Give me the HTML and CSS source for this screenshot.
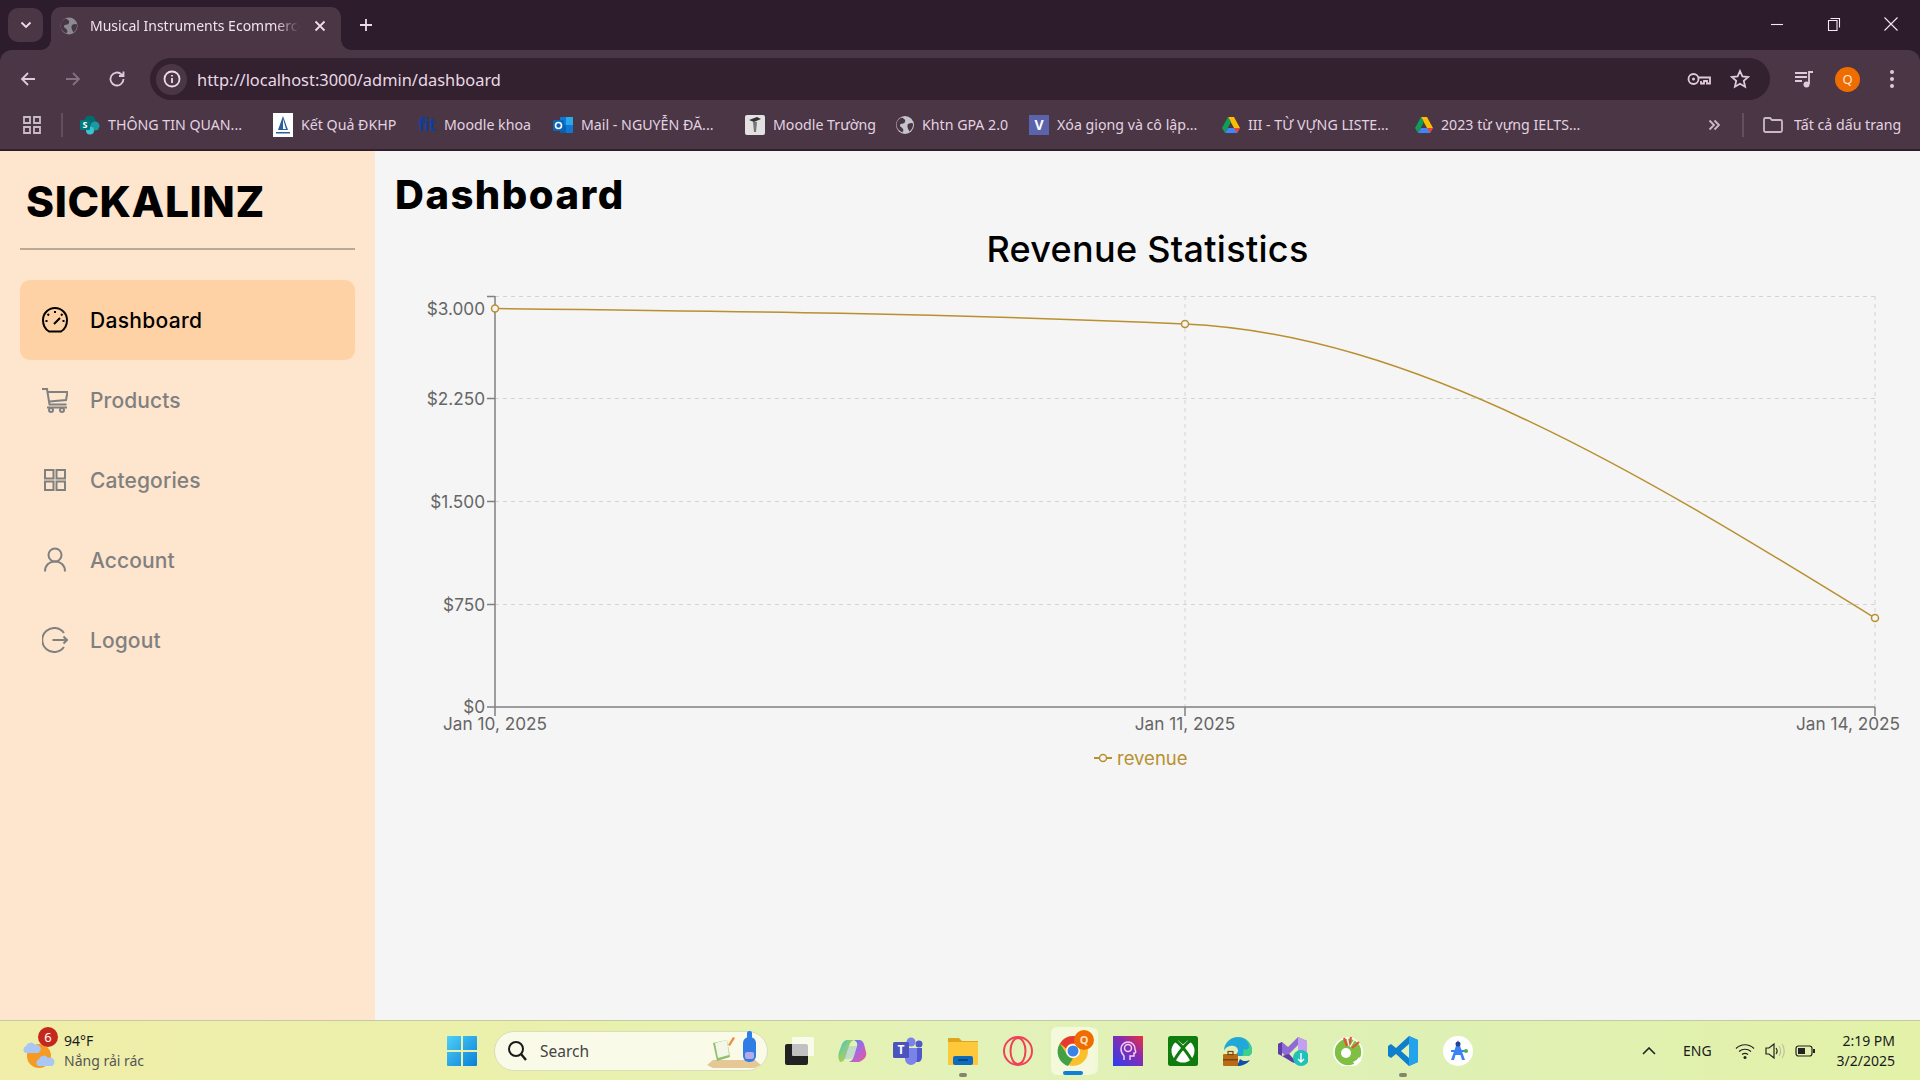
FILE: index.html
```html
<!DOCTYPE html>
<html lang="vi">
<head>
<meta charset="utf-8">
<title>Musical Instruments Ecommerce</title>
<link rel="stylesheet" href="styles.css">
</head>
<body>
<header class="chrome">
  <div class="tabstrip">
    <button class="tab-menu"><svg width="12" height="8" viewBox="0 0 12 8"><path d="M1.500 1.500 6 6l4.500-4.500" class="ic-w"/></svg></button>
    <div class="tab">
      <svg class="fav" width="18" height="18" viewBox="0 0 18 18"><circle cx="9" cy="9" r="8.500" fill="#8d8b92"/><path d="M6 1.500c2 1.500 4 2 3 4.500S4.500 7 4 9s3 2.500 3.500 5l-1 2.500C3 15 .5 12 .5 9 .5 5 3 2.500 6 1.500zM12 8c2-1 3.500-1.500 5-.5.300 3-1 6-3.500 8-1-2-3-5-1.500-7.500z" fill="#4a3546"/></svg>
      <span class="tab-title">Musical Instruments Ecommerce</span>
      <svg class="tab-x" width="12" height="12" viewBox="0 0 12 12"><path d="M1.500 1.500l9 9m0-9-9 9" class="ic-w"/></svg>
    </div>
    <svg class="tab-new" width="14" height="14" viewBox="0 0 14 14"><path d="M7 1v12M1 7h12" class="ic-w"/></svg>
    <div class="winctl">
      <svg width="14" height="14" viewBox="0 0 14 14"><path d="M1 7.500h12" class="ic-thin"/></svg>
      <svg width="14" height="14" viewBox="0 0 14 14"><path d="M3.500 1.500h9v9M1.500 3.500h8.500v10h-8.500z" class="ic-thin"/></svg>
      <svg width="14" height="14" viewBox="0 0 14 14"><path d="M.5.500l13 13m0-13-13 13" class="ic-thin"/></svg>
    </div>
  </div>
  <div class="toolbar">
    <div class="nav-btns">
      <svg width="18" height="18" viewBox="0 0 18 18"><path d="M16 9H3M9 3 3 9l6 6" class="ic"/></svg>
      <svg width="18" height="18" viewBox="0 0 18 18"><path d="M2 9h13M9 3l6 6-6 6" class="ic-dim"/></svg>
      <svg width="18" height="18" viewBox="0 0 18 18"><path d="M15.500 9a6.500 6.500 0 1 1-2-4.700L15.500 6M15.500 1.500V6H11" class="ic"/></svg>
    </div>
    <div class="omnibox">
      <span class="info"><svg width="18" height="18" viewBox="0 0 18 18"><circle cx="9" cy="9" r="7.500" class="ic-w"/><path d="M9 8v5M9 5v1.500" class="ic-w"/></svg></span>
      <span class="url">http://localhost:3000/admin/dashboard</span>
      <svg class="omni-key" width="24" height="16" viewBox="0 0 24 16"><circle cx="6.500" cy="8" r="5" class="ic"/><circle cx="6.500" cy="8" r="1.500" fill="#dfc9da"/><path d="M11.500 6.500H23v6h-3V10h-3v2.500h-3V10" class="ic"/></svg>
      <svg class="omni-star" width="20" height="20" viewBox="0 0 20 20"><path d="M10 2l2.400 5.400 5.800.600-4.400 3.900 1.300 5.800L10 14.700l-5.100 3 1.300-5.800L1.800 8l5.800-.600z" class="ic"/></svg>
    </div>
    <div class="tools">
      <svg width="20" height="20" viewBox="0 0 20 20"><path d="M1 4h12M1 8h12M1 12h7M15 15V3h4" class="ic"/><circle cx="12.500" cy="15.500" r="3" fill="#dfc9da"/></svg>
      <span class="avatar">Q</span>
      <svg width="6" height="20" viewBox="0 0 6 20"><circle cx="3" cy="3" r="2" fill="#dfc9da"/><circle cx="3" cy="10" r="2" fill="#dfc9da"/><circle cx="3" cy="17" r="2" fill="#dfc9da"/></svg>
    </div>
  </div>
  <nav class="bookmarks">
    <span class="bm-apps"><svg width="18" height="18" viewBox="0 0 18 18"><path d="M1 1h6v6H1zM11 1h6v6h-6zM1 11h6v6H1zM11 11h6v6h-6z" class="ic-grey"/></svg></span>
    <span class="bm-sep"></span>
    <a class="bm"><svg width="20" height="20" viewBox="0 0 20 20"><circle cx="10" cy="6" r="5.500" fill="#036c70"/><circle cx="15" cy="11" r="4.500" fill="#1a9ba1"/><circle cx="10" cy="15.500" r="4" fill="#37c6d0"/><rect x="0" y="5" width="10" height="10" rx="1" fill="#03787c"/><text x="5" y="13" class="bm-glyph">S</text></svg><span>THÔNG TIN QUAN...</span></a>
    <a class="bm"><svg width="20" height="24" viewBox="0 0 20 24"><rect width="20" height="24" fill="#fff"/><path d="M10 3 5 17h10z" fill="#2a5d9c"/><path d="M10 6v10h3z" fill="#fff"/><path d="M3 19h14v1.500H3z" fill="#2a5d9c"/></svg><span>Kết Quả ĐKHP</span></a>
    <a class="bm"><span class="fit">fit</span><span>Moodle khoa</span></a>
    <a class="bm"><svg width="20" height="20" viewBox="0 0 20 20"><rect x="7" y="2" width="13" height="16" rx="1" fill="#0f78d4"/><rect x="13" y="2" width="7" height="8" fill="#29a8ea"/><rect x="7" y="10" width="6" height="8" fill="#0a5eb0"/><rect y="5" width="11" height="11" rx="1" fill="#0a64b8"/><circle cx="5.500" cy="10.500" r="3" fill="none" stroke="#fff" stroke-width="1.600"/></svg><span>Mail - NGUYỄN ĐĂ...</span></a>
    <a class="bm"><svg width="20" height="20" viewBox="0 0 20 20"><rect width="20" height="20" rx="2" fill="#e2e2e2"/><path d="M4 5l8-3 4 2-7 3z" fill="#333"/><path d="M8 7h4l-1 10H9z" fill="#777"/></svg><span>Moodle Trường</span></a>
    <a class="bm"><svg width="18" height="18" viewBox="0 0 18 18"><circle cx="9" cy="9" r="9" fill="#c5c4c9"/><path d="M6 1.500c2 1.500 4 2 3 4.500S4.500 7 4 9s3 2.500 3.500 5l-1 2.500C3 15 .5 12 .5 9 .5 5 3 2.500 6 1.500zM12 8c2-1 3.500-1.500 5-.5.300 3-1 6-3.500 8-1-2-3-5-1.500-7.500z" fill="#4a3546"/></svg><span>Khtn GPA 2.0</span></a>
    <a class="bm"><span class="vbadge">V</span><span>Xóa giọng và cô lập...</span></a>
    <a class="bm"><svg width="18" height="18" viewBox="0 0 18 18"><path d="M6 1h6l6 11h-6z" fill="#fbbc04"/><path d="M6 1 0 12l3 5 6-11z" fill="#0f9d58"/><path d="M3 17h12l3-5H6z" fill="#4285f4"/><path d="M18 12h-6l3 5z" fill="#ea4335"/></svg><span>III - TỪ VỰNG LISTE...</span></a>
    <a class="bm"><svg width="18" height="18" viewBox="0 0 18 18"><path d="M6 1h6l6 11h-6z" fill="#fbbc04"/><path d="M6 1 0 12l3 5 6-11z" fill="#0f9d58"/><path d="M3 17h12l3-5H6z" fill="#4285f4"/><path d="M18 12h-6l3 5z" fill="#ea4335"/></svg><span>2023 từ vựng IELTS...</span></a>
    <span class="bm-more"><svg width="12" height="12" viewBox="0 0 12 12"><path d="M1.500 1.500 6 6l-4.500 4.500M6.500 1.500 11 6l-4.500 4.500" class="ic-grey"/></svg></span>
    <span class="bm-sep"></span>
    <a class="bm bm-all"><svg width="20" height="18" viewBox="0 0 20 18"><path d="M1 3.500a1.500 1.500 0 0 1 1.500-1.500H7l2 2h8.500A1.500 1.500 0 0 1 19 5.500v9a1.500 1.500 0 0 1-1.500 1.500h-15A1.500 1.500 0 0 1 1 14.500z" class="ic-grey"/></svg><span>Tất cả dấu trang</span></a>
  </nav>
</header>

<div class="page">
  <aside class="sidebar">
    <div class="brand">SICKALINZ</div>
    <ul class="menu">
      <li class="menu-item active">
        <svg width="26" height="26" viewBox="0 0 26 26"><path d="M7 24.500C3.500 22.500 1 18 1 13a12 12 0 0 1 24 0c0 5-2.500 9.500-6 11.500z" class="ni"/><path d="M13 4v2M5.500 7l1.500 1.500M20.500 7 19 8.500M3.500 14h2M20.500 14h2M12 17l6-6" class="ni"/></svg>
        <span>Dashboard</span>
      </li>
      <li class="menu-item">
        <svg width="26" height="26" viewBox="0 0 26 26"><path d="M0 2h5l2.500 15.500h17M5.500 5h20l-1.500 8-16.500 1.500" class="ni"/><path d="M5 20.500h20" class="ni"/><circle cx="9" cy="23" r="2" class="ni"/><circle cx="20" cy="23" r="2" class="ni"/></svg>
        <span>Products</span>
      </li>
      <li class="menu-item">
        <svg width="26" height="26" viewBox="0 0 26 26"><path d="M3 3h8.500v8.500H3zM14.500 3H23v8.500h-8.500zM3 14.500h8.500V23H3zM14.500 14.500H23V23h-8.500z" class="ni"/></svg>
        <span>Categories</span>
      </li>
      <li class="menu-item">
        <svg width="26" height="26" viewBox="0 0 26 26"><circle cx="13" cy="8" r="6.500" class="ni"/><path d="M3 24.500c0-6.500 4.500-10 10-10s10 3.500 10 10" class="ni"/></svg>
        <span>Account</span>
      </li>
      <li class="menu-item">
        <svg width="26" height="26" viewBox="0 0 26 26"><path d="M22 6A12 12 0 1 0 22 20" class="ni"/><path d="M10.500 13H25M21.500 9.500 25 13l-3.500 3.500" class="ni"/></svg>
        <span>Logout</span>
      </li>
    </ul>
  </aside>
  <main class="main">
    <h1 class="page-title">Dashboard</h1>
    <h2 class="chart-title">Revenue Statistics</h2>
    <svg class="chart" width="1545" height="520" viewBox="375 273 1545 520">
      <g class="grid">
        <path d="M495 296.500H1875M495 398.500H1875M495 501.500H1875M495 604.500H1875M1185 296V707M1875 296V707"/>
      </g>
      <g class="axis">
        <path d="M495 296V707H1875M487 296.500h8M487 398.500h8M487 501.500h8M487 604.500h8M487 707h8M495 707v9M1185 707v9M1875 707v9"/>
      </g>
      <g class="ylab">
        <text x="485" y="315">$3.000</text>
        <text x="485" y="405">$2.250</text>
        <text x="485" y="508">$1.500</text>
        <text x="485" y="611">$750</text>
        <text x="485" y="713">$0</text>
      </g>
      <g class="xlab">
        <text x="495" y="730">Jan 10, 2025</text>
        <text x="1185" y="730">Jan 11, 2025</text>
        <text x="1900" y="730" class="xlab-end">Jan 14, 2025</text>
      </g>
      <path class="line" d="M495 308.500C725 311.080 955 313.670 1185 324C1415 334.330 1645 476.200 1875 618"/>
      <circle class="dot" cx="495" cy="308.500" r="3.500"/>
      <circle class="dot" cx="1185" cy="324" r="3.500"/>
      <circle class="dot" cx="1875" cy="618" r="3.500"/>
      <path class="line legend-line" d="M1094 758h18"/>
      <circle class="dot" cx="1103" cy="758" r="3.500"/>
      <text class="legend" x="1117" y="765">revenue</text>
    </svg>
  </main>
</div>

<footer class="taskbar">
  <div class="weather">
    <svg class="w-icon" width="36" height="40" viewBox="0 0 36 40"><circle cx="17" cy="23" r="12" fill="#f59a23"/><path d="M3 20a4 4 0 0 1 1-7 5 5 0 0 1 9-1 4 4 0 0 1 3 8z" fill="#a9c6f5"/><path d="M16 33a4 4 0 0 1 1-7 5 5 0 0 1 9-1 4 4 0 0 1 4 8z" fill="#a9c6f5"/></svg>
    <span class="w-badge">6</span>
    <div class="w-text"><span class="w-temp">94°F</span><span class="w-desc">Nắng rải rác</span></div>
  </div>
  <div class="center">
    <svg class="winlogo" width="30" height="30" viewBox="0 0 30 30"><defs><linearGradient id="wl" x1="0" y1="0" x2="1" y2="1"><stop offset="0" stop-color="#4dd0f7"/><stop offset="1" stop-color="#0a7fd8"/></linearGradient></defs><path d="M0 1a1 1 0 0 1 1-1h13v14H0zM16 0h13a1 1 0 0 1 1 1v13H16zM0 16h14v14H1a1 1 0 0 1-1-1zM16 16h14v13a1 1 0 0 1-1 1H16z" fill="url(#wl)"/></svg>
    <div class="search">
      <svg width="20" height="22" viewBox="0 0 20 22"><circle cx="9" cy="9" r="7" fill="none" stroke="#1a1a1a" stroke-width="2"/><path d="M14 14l5 6" stroke="#1a1a1a" stroke-width="2.400"/></svg>
      <span class="search-text">Search</span>
      <svg class="search-art" width="54" height="38" viewBox="0 0 54 38"><path d="M0 34l6-5h42l6 5-6 3H6z" fill="#e6c796"/><path d="M6 12l14-3 3 17-13 4z" fill="#8fbf6a"/><path d="M8 12l12-3 2 15-11 3z" fill="#f4f6e8"/><path d="M21 14l5-8 2 1-5 8z" fill="#f08a3a"/><rect x="36" y="6" width="13" height="25" rx="6" fill="#2f7ee6"/><rect x="40" y="0" width="5" height="8" rx="2" fill="#2f7ee6"/><rect x="38" y="21" width="9" height="7" rx="2" fill="#b8a8e8"/></svg>
    </div>
    <div class="apps">
      <span class="app"><svg width="30" height="28" viewBox="0 0 30 28"><rect y="7" width="23" height="21" rx="2" fill="#222"/><rect x="7" width="22" height="19" rx="1" fill="#fff" fill-opacity=".72"/></svg></span>
      <span class="app"><svg width="29" height="24" viewBox="0 0 29 24"><defs><linearGradient id="cp1" x1="0" y1="0" x2="1" y2="1"><stop offset="0" stop-color="#35c1e8"/><stop offset=".5" stop-color="#9ad060"/><stop offset="1" stop-color="#f3b52f"/></linearGradient><linearGradient id="cp2" x1="0" y1="0" x2="1" y2="1"><stop offset="0" stop-color="#2f8fe8"/><stop offset=".5" stop-color="#a868e0"/><stop offset="1" stop-color="#ee5a8a"/></linearGradient></defs><path d="M9 1h7c-3 1-4 3-5 6L7 19c-1 3-3 4-5 4-2-3-2-7-1-10L4 5c1-2 3-4 5-4z" fill="url(#cp1)"/><path d="M16 1h5c3 0 4 2 5 4l2 8c1 4-1 7-5 9-1 1-3 1-4 1h-8c3-1 4-3 5-6l3-10c1-3-1-5-3-6z" fill="url(#cp2)"/><path d="M6 10c2-2 4-3 6-3h7l-3 10c-1 2-3 3-5 3H5z" fill="#7fb7ef" fill-opacity=".35"/></svg></span>
      <span class="app"><svg width="30" height="30" viewBox="0 0 30 30"><circle cx="18" cy="6" r="4.500" fill="#7b83eb"/><circle cx="26" cy="8" r="3.500" fill="#5059c9"/><path d="M21 12h8v9c0 3-2 5-4 5h-4z" fill="#5059c9"/><path d="M10 12h14v11a6 6 0 0 1-12 0z" fill="#7b83eb"/><rect y="6" width="16" height="16" rx="1.500" fill="#4b53bc"/><text x="8" y="18" class="app-glyph">T</text></svg></span>
      <span class="app"><svg width="30" height="28" viewBox="0 0 30 28"><path d="M0 1h11l3 3h16v6H0z" fill="#e0a41f"/><path d="M0 5h30v23H0z" fill="#fdc93a"/><rect x="5" y="19" width="20" height="9" rx="2" fill="#0f6cbd"/><path d="M10 23h10" stroke="#083f70" stroke-width="1.500"/></svg></span>
      <span class="app"><svg width="30" height="30" viewBox="0 0 30 30"><ellipse cx="15" cy="15" rx="14" ry="14" fill="none" stroke="#f0405a" stroke-width="2"/><ellipse cx="15" cy="15" rx="7.500" ry="13" fill="none" stroke="#f0405a" stroke-width="2"/></svg></span>
      <span class="app app-active"><svg width="30" height="34" viewBox="0 0 30 34"><g transform="translate(0,-2)"><circle cx="15" cy="19" r="15" fill="#fbc02d"/><path d="M15 4a15 15 0 0 1 13 7.500H15a7.500 7.500 0 0 0-7 5L2 11.500A15 15 0 0 1 15 4z" fill="#e53935"/><path d="M2 11.500l7 11a7.500 7.500 0 0 0 6 4L10 34A15 15 0 0 1 2 11.500z" fill="#43a047"/><circle cx="15" cy="19" r="7" fill="#fff"/><circle cx="15" cy="19" r="5.500" fill="#3b82e6"/></g><circle cx="26" cy="6" r="10" fill="#ef6c00"/><text x="26" y="10" class="app-q">Q</text></svg></span>
      <span class="app"><svg width="30" height="30" viewBox="0 0 30 30"><defs><linearGradient id="pp" x1="0" y1="1" x2="1" y2="0"><stop offset="0" stop-color="#2b3ff0"/><stop offset=".6" stop-color="#8a2bb0"/><stop offset="1" stop-color="#f0303a"/></linearGradient></defs><rect width="30" height="30" fill="url(#pp)"/><path d="M11 24v-4c-2-2-3-4-3-7a7 7 0 0 1 14 0c0 2 2 3 0 4h-1v3h-4v4" fill="none" stroke="#f2d0f0" stroke-width="1.500"/><circle cx="15" cy="12" r="3.500" fill="none" stroke="#f2d0f0" stroke-width="1.500"/></svg></span>
      <span class="app"><svg width="30" height="30" viewBox="0 0 30 30"><rect width="30" height="30" rx="2.500" fill="#107c10"/><circle cx="15" cy="15" r="11.500" fill="#fff"/><path d="M6 4c4 1 15 14 19 23M24 4C20 5 9 18 5 27" fill="none" stroke="#107c10" stroke-width="3"/><path d="M8 2.500c4-2 10-2 14 0l-7 6z" fill="#107c10"/></svg></span>
      <span class="app"><svg width="30" height="30" viewBox="0 0 30 30"><path d="M1 15a14 14 0 0 1 28 0c0 3-2 5-5 5h-9c-2 0-2-2-1-3 2-2 1-6-3-7-5-1-9 2-10 5z" fill="#1fa8d8"/><path d="M29 15c0-7-6-14-14-14 5 0 11 4 11 10-1 3-4 3-6 2 1 3 0 6-1 7h5c3 0 5-2 5-5z" fill="#3fd08a"/><path d="M14 30c5 0 10-2 13-6-4 2-8 1-10-1z" fill="#0f4fa8"/><rect y="18" width="15" height="12" rx="1" fill="#b86a14"/><rect x="5" y="15.500" width="5" height="3" fill="none" stroke="#7a4410" stroke-width="1.200"/><rect y="23" width="15" height="1.500" fill="#7a4410"/></svg></span>
      <span class="app"><svg width="30" height="30" viewBox="0 0 30 30"><path d="M20 1l9 4v18l-9 5V9l-9 9 9 10-6-2L0 13V8l4-2 6 5z" fill="#8f6bd8"/><path d="M20 1l9 4v18l-9 5z" fill="#c49ff0"/><path d="M0 8l4-2v14l-4-2z" fill="#5e3ea6"/><path d="M4 20l10 6 6 2-9-10z" fill="#5e3ea6"/><circle cx="23" cy="22" r="8" fill="#20c2b8"/><path d="M23 17v9M20 23l3 3 3-3" fill="none" stroke="#fff" stroke-width="1.400"/></svg></span>
      <span class="app"><svg width="30" height="30" viewBox="0 0 30 30"><circle cx="15" cy="16" r="14" fill="#7fbf44" stroke="#fff" stroke-width="1.500"/><circle cx="13" cy="17" r="5" fill="#fff"/><path d="M20 26a10 10 0 0 0 6-5l3 3-6 6z" fill="#fff"/><path d="M11 2l3 8M18 1l-2 9M26 6l-7 6" stroke="#e8503a" stroke-width="2.200"/><path d="M14 1l2 9M22 3l-5 8" stroke="#fff" stroke-width="1.200"/></svg></span>
      <span class="app"><svg width="30" height="30" viewBox="0 0 30 30"><path d="M21 0l9 4v22l-9 4L8 18l-5 4-3-2v-10l3-2 5 4z" fill="#0f7fcb"/><path d="M21 0l9 4v22l-9 4z" fill="#23a3ec"/><path d="M21 8v14l-8-7z" fill="#e3f2b8"/></svg></span>
      <span class="app"><svg width="30" height="30" viewBox="0 0 30 30"><circle cx="15" cy="15" r="15" fill="#fff"/><path d="M15 4l-7 20h3l1.500-5h5l1.500 5h3z" fill="#3b82f6"/><circle cx="15" cy="8" r="2.500" fill="#24408e"/><path d="M8 15h14" stroke="#3b82f6" stroke-width="2"/><circle cx="23" cy="15" r="2" fill="#4caf50"/></svg></span>
    </div>
  </div>
  <div class="tray">
    <svg class="tray-chev" width="14" height="8" viewBox="0 0 14 8"><path d="M1 7l6-6 6 6" class="tr"/></svg>
    <span class="tray-lang">ENG</span>
    <svg class="tray-wifi" width="20" height="16" viewBox="0 0 20 16"><path d="M1 5.500c5-5 13-5 18 0M4 8.500c3.500-3 8.500-3 12 0M7 11.500c2-1.500 4-1.500 6 0" class="tr-t"/><circle cx="10" cy="14.500" r="1.500" fill="#222"/></svg>
    <svg class="tray-vol" width="20" height="16" viewBox="0 0 20 16"><path d="M1 5h3l5-4v14l-5-4H1z" class="tr-t"/><path d="M11 5c1.500 2 1.500 4 0 6" class="tr-t"/><path d="M14 3c2 3 2 7 0 10M17 1c3 4 3 10 0 14" class="tr-faint"/></svg>
    <svg class="tray-bat" width="20" height="12" viewBox="0 0 20 12"><rect x="1" y="1" width="16" height="10" rx="2.500" class="tr-t"/><rect x="3" y="3" width="7" height="6" fill="#222"/><rect x="18" y="4" width="2" height="4" fill="#222"/></svg>
    <div class="clock"><span>2:19 PM</span><span>3/2/2025</span></div>
  </div>
</footer>
</body>
</html>
```
FILE: styles.css
```css
* { box-sizing: border-box; }
html, body { margin: 0; height: 100%; }
body {
  width: 1920px;
  height: 1080px;
  overflow: hidden;
  display: flex;
  flex-direction: column;
  font-family: "Noto Sans", "Open Sans", sans-serif;
  background: #f5f5f5;
}

/* stroke helpers */
.ic-w { fill: none; stroke: #ecdcea; stroke-width: 1.800; }
.ic { fill: none; stroke: #dfc9da; stroke-width: 1.800; }
.ic-dim { fill: none; stroke: #857081; stroke-width: 1.800; }
.ic-thin { fill: none; stroke: #f3e9f1; stroke-width: 1.100; }
.ic-grey { fill: none; stroke: #c9bbc6; stroke-width: 1.800; }

/* browser chrome */
.chrome { height: 151px; flex: none; background: #2d1c2c; display: flex; flex-direction: column; }
.tabstrip { height: 50px; display: flex; align-items: flex-end; position: relative; }
.tab-menu {
  width: 35px; height: 34px; margin: 0 8px 8px; padding: 0; border: 0; border-radius: 10px;
  background: #4b3646; display: flex; align-items: center; justify-content: center;
}
.tab {
  width: 290px; height: 43px; background: #4b3646; border-radius: 10px 10px 0 0;
  display: flex; align-items: center; padding: 0 15px 6px 9px; position: relative;
}
.tab::before, .tab::after {
  content: ""; position: absolute; bottom: 0; width: 10px; height: 10px;
}
.tab::before { left: -10px; background: radial-gradient(circle at 0 0, #2d1c2c 9.500px, #4b3646 10px); }
.tab::after { right: -10px; background: radial-gradient(circle at 100% 0, #2d1c2c 9.500px, #4b3646 10px); }
.fav { flex: none; margin-right: 12px; }
.tab-title {
  width: 210px; flex: none; overflow: hidden; white-space: nowrap; font-size: 14px; color: #f0e2ee;
  -webkit-mask-image: linear-gradient(90deg, #000 88%, transparent 100%);
  mask-image: linear-gradient(90deg, #000 88%, transparent 100%);
}
.tab-x { margin-left: 14px; flex: none; }
.tab-new { margin: 0 0 18px 18px; }
.winctl { margin-left: auto; width: 150px; padding-right: 22px; height: 50px; display: flex; align-items: flex-start; justify-content: space-between; padding-top: 17px; }

.toolbar {
  height: 50px; background: #4b3646; border-radius: 12px 12px 0 0; padding-top: 8px;
  display: flex; align-items: center;
}
.nav-btns { width: 150px; padding: 0 24px 0 19px; display: flex; justify-content: space-between; flex: none; }
.omnibox {
  width: 1620px; height: 42px; border-radius: 21px; background: #33212f;
  display: flex; align-items: center; padding: 0 20px 0 6px; flex: none;
}
.info { width: 31px; height: 31px; border-radius: 50%; background: #4b3646; display: flex; align-items: center; justify-content: center; flex: none; }
.url { margin-left: 10px; font-size: 16.400px; color: #e9d9e6; white-space: nowrap; flex: 1; }
.omni-star { margin-left: 19px; }
.tools { flex: 1; display: flex; align-items: center; padding-left: 24px; }
.avatar {
  width: 25px; height: 25px; border-radius: 50%; background: #ef6c00; color: #ffe9d6; font-size: 13px;
  display: flex; align-items: center; justify-content: center; margin: 0 29px 0 21px;
}

.bookmarks {
  height: 50px; background: #4b3646; border-bottom: 1px solid #33212f;
  display: grid; align-items: center; padding-left: 23px;
  grid-template-columns: 38px 19px 193px 145px 135px 192px 151px 133px 193px 193px 293px 34px 21px 1fr;
}
.bm-apps, .bm-more { display: flex; align-items: center; }
.bm-sep { width: 2px; height: 24px; background: #62505f; }
.bm { display: flex; align-items: center; gap: 8px; color: #e3d3e0; font-size: 14.200px; white-space: nowrap; }
.bm svg { flex: none; }
.bm-glyph { font: 700 9px "Noto Sans", sans-serif; fill: #fff; text-anchor: middle; }
.fit { width: 18px; color: #0e3f9e; font: 700 17px "Open Sans", sans-serif; letter-spacing: -.5px; }
.vbadge { width: 20px; height: 20px; background: #5a63ab; color: #fff; font-size: 14px; font-weight: 700; display: flex; align-items: center; justify-content: center; flex: none; }
.bm-all { gap: 11px; }

/* page */
.page { flex: 1; display: flex; min-height: 0; }
.sidebar { width: 375px; flex: none; background: #fee5cd; padding: 0 20px; }
.brand {
  height: 99px; padding: 21px 0 0 6px; border-bottom: 2px solid #baa896;
  font: 800 42.500px/60px Inter, sans-serif; color: #000; letter-spacing: .6px;
}
.menu { list-style: none; margin: 30px 0 0; padding: 0; }
.menu-item {
  height: 80px; display: flex; align-items: center; gap: 22px; padding-left: 22px; border-radius: 10px;
  font: 500 21px Inter, sans-serif; letter-spacing: .1px; color: #808080;
}
.menu-item svg { flex: none; }
.ni { fill: none; stroke: currentColor; stroke-width: 2; }
.menu-item.active { background: #fed2a4; color: #000; letter-spacing: .3px; }

.main { flex: 1; min-width: 0; padding-top: 14px; }
.page-title { margin: 0; padding-left: 20px; font: 800 40px/60px Inter, sans-serif; letter-spacing: 1.500px; color: #000; height: 60px; }
.chart-title { margin: 0; height: 48px; text-align: center; font: 500 36px/48px Inter, sans-serif; letter-spacing: .3px; color: #000; }
.chart { display: block; }
.grid path { fill: none; stroke: #d4d4d4; stroke-width: 1; stroke-dasharray: 4 4; }
.axis path { fill: none; stroke: #808080; stroke-width: 1.500; }
.ylab text, .xlab text { font: 400 17.200px Inter, sans-serif; fill: #666; }
.ylab text { text-anchor: end; }
.xlab text { text-anchor: middle; }
.xlab .xlab-end { text-anchor: end; }
.line { fill: none; stroke: #b8902f; stroke-width: 1.500; }
.legend-line { stroke-width: 2; }
.dot { fill: #f5f5f5; stroke: #b8902f; stroke-width: 1.500; }
.legend { font: 400 18.500px Inter, sans-serif; fill: #b8902f; }

/* taskbar */
.taskbar {
  height: 60px; flex: none; border-top: 1px solid #c6caa2; display: flex; align-items: center; position: relative;
  background: linear-gradient(90deg, #f0eea9 0%, #ebf0ab 25%, #e3f2b8 50%, #dff0b4 75%, #e3f2a8 100%);
}
.weather { width: 447px; flex: none; display: flex; align-items: center; padding-left: 22px; position: relative; height: 100%; }
.w-icon { flex: none; margin-top: 4px; }
.w-badge {
  position: absolute; left: 38px; top: 6px; width: 20px; height: 20px; border-radius: 50%; background: #c4281c; color: #fff;
  font-size: 13px; display: flex; align-items: center; justify-content: center;
}
.w-text { display: flex; flex-direction: column; margin-left: 6px; font-size: 14px; line-height: 20px; color: #1a1a1a; }
.w-desc { color: #555; }
.center { display: flex; align-items: center; flex: none; }
.search {
  width: 274px; height: 40px; margin-left: 17px; border-radius: 20px; background: #f9fbe8; border: 1px solid #d9dfb8;
  display: flex; align-items: center; padding: 0 6px 0 12px; position: relative;
}
.search-text { margin-left: 13px; font-size: 15.500px; color: #444; flex: 1; }
.search-art { flex: none; margin-top: -2px; }
.apps { display: flex; align-items: center; margin-left: 17px; }
.app { width: 55px; height: 48px; display: flex; align-items: center; justify-content: center; position: relative; }
.app:nth-child(1) { width: 34px; justify-content: flex-start; }
.app:nth-child(2) { margin-left: 6px; }
.app:nth-child(4)::after, .app:nth-child(12)::after {
  content: ""; position: absolute; bottom: -2px; left: 50%; width: 8px; height: 4px; margin-left: -4px; border-radius: 2px; background: #84866a;
}
.app-active { background: #f4f9dc; border-radius: 6px; width: 44px; margin: 0 5px 0 6px; box-shadow: 4px 0 0 -1px #f2f7d6; }
.app-active svg { overflow: visible; }
.app-active::after {
  content: ""; position: absolute; bottom: 0; left: 50%; width: 20px; height: 4px; margin-left: -10px; border-radius: 2px; background: #0f7fd8;
}
.app-glyph { font: 700 12px "Noto Sans", sans-serif; fill: #fff; text-anchor: middle; }
.app-q { font: 700 11px "Noto Sans", sans-serif; fill: #ffe0c0; text-anchor: middle; }
.tray { margin-left: auto; width: 278px; display: flex; align-items: center; color: #1a1a1a; padding-right: 25px; flex: none; }
.tr { fill: none; stroke: #222; stroke-width: 1.600; }
.tr-t { fill: none; stroke: #222; stroke-width: 1.200; }
.tr-faint { fill: none; stroke: #bdbf9c; stroke-width: 1.200; }
.tray-chev { flex: none; }
.tray-lang { margin-left: 27px; font-size: 14px; width: 30px; }
.tray-wifi { margin-left: 22px; flex: none; }
.tray-vol { margin-left: 10px; flex: none; }
.tray-bat { margin-left: 10px; flex: none; }
.clock { margin-left: auto; display: flex; flex-direction: column; align-items: flex-end; font-size: 14px; line-height: 20px; }
```
